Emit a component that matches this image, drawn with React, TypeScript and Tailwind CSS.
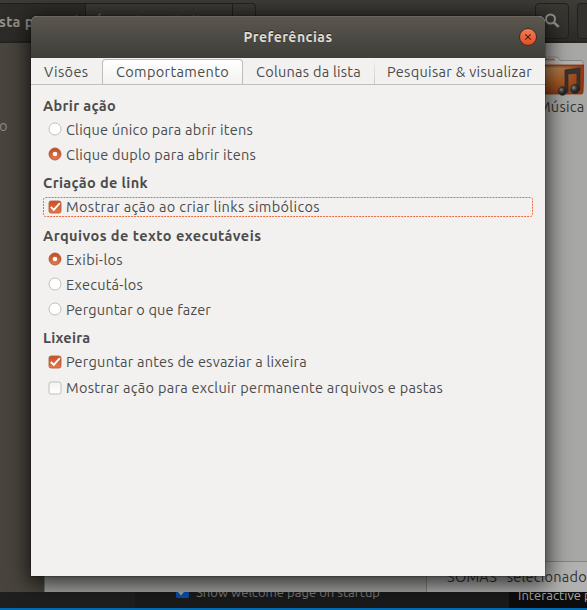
import { useLayoutEffect, useRef, useState } from "react";
import type { ReactNode } from "react";

function Label({ text, width, className = "" }: { text: string; width: number; className?: string }) {
  const ref = useRef<HTMLSpanElement>(null);
  const [tracking, setTracking] = useState(0);
  useLayoutEffect(() => {
    if (ref.current) {
      setTracking((width - ref.current.getBoundingClientRect().width) / text.length);
    }
  }, []);
  return (
    <span ref={ref} style={{ letterSpacing: tracking }} className={`inline-block shrink-0 whitespace-pre leading-5 ${className}`}>
      {text}
    </span>
  );
}

function Heading({ text, width, className = "" }: { text: string; width: number; className?: string }) {
  return (
    <h2 className={`flex h-6 items-center pl-3 font-bold ${className}`}>
      <Label text={text} width={width} />
    </h2>
  );
}

function Radio({ on = false }: { on?: boolean }) {
  return (
    <svg viewBox="0 0 14 14" className="mb-[2px] h-3.5 w-3.5 shrink-0">
      <defs>
        <linearGradient id="radio" x2="0" y2="1">
          <stop stopColor="#bd4c20" />
          <stop offset="1" stopColor="#ea7850" />
        </linearGradient>
      </defs>
      <circle cx="7" cy="7" r="6" fill={on ? "url(#radio)" : "#fff"} stroke={on ? "#ad5b3b" : "#bbb8b5"} strokeWidth=".9" />
      {on && <circle cx="7" cy="7" r="2.3" fill="#fff" />}
    </svg>
  );
}

function Check({ on = false }: { on?: boolean }) {
  return (
    <svg viewBox="0 0 14 14" className="h-3.5 w-3.5 shrink-0">
      <defs>
        <linearGradient id="check" x2="0" y2="1">
          <stop stopColor="#c94f21" />
          <stop offset="1" stopColor="#e8764e" />
        </linearGradient>
        <linearGradient id="empty" x2="0" y2="1">
          <stop stopColor="#f3f2f1" />
          <stop offset="1" stopColor="#fff" />
        </linearGradient>
      </defs>
      <rect x="1" y="1" width="12" height="12" rx="2" fill={on ? "url(#check)" : "url(#empty)"} stroke={on ? "#b06345" : "#bbb8b5"} strokeWidth=".9" />
      {on && <path d="m2.8 6.8 3 3 6-6.6" fill="none" stroke="#fff" strokeWidth="1.9" />}
    </svg>
  );
}

function Option({ text, width, control, className }: { text: string; width: number; control: ReactNode; className: string }) {
  return (
    <label className={`flex items-center gap-[4px] pl-[17px] ${className}`}>
      {control}
      <Label text={text} width={width} />
    </label>
  );
}

function FileManager() {
  return (
    <div className="flex h-[592px] flex-col overflow-hidden bg-[#a7a7a5]">
      <header className="flex h-[43px] shrink-0 border-b-2 border-[#252420] bg-linear-to-b from-[#3d3c37] to-[#2c2b28] pt-[3px]">
        <div className="flex h-9 w-[86px] shrink-0 items-center overflow-hidden border-t border-r border-[#20201d] bg-[#2d2c28] text-[14.5px] font-bold text-[#94928b]">
          <Label text="sta pessoal" width={80} className="-ml-px" />
        </div>
        <div className="flex h-9 w-[147px] shrink-0 items-center border-t border-r border-[#20201d] pl-2 font-bold text-[#74726c]">
          <Label text="Área de trabalho" width={120} />
        </div>
        <div className="h-9 w-[23px] shrink-0 rounded-tr border-t border-r border-[#24231f]" />
        <div className="flex-1" />
        <div className="flex h-9 w-[34px] shrink-0 items-center justify-center rounded border border-[#22211e] bg-linear-to-b from-[#393833] to-[#2f2e2b]">
          <svg viewBox="0 0 16 16" className="h-4 w-4" fill="none" stroke="#979690" strokeWidth="2">
            <circle cx="6.5" cy="6" r="4.5" />
            <path d="m9.8 9.3 4.9 4.6" strokeWidth="2.5" />
          </svg>
        </div>
        <div className="ml-2 h-9 w-[10px] shrink-0 rounded-l border border-r-0 border-[#22211e] bg-[#33322e]" />
      </header>
      <div className="flex min-h-0 flex-1">
        <aside className="w-[45px] shrink-0 border-r border-[#777775] bg-[#49453e] pt-[73px] text-[#8b8881]">
          <span className="-ml-px block leading-5">o</span>
        </aside>
        <main className="flex flex-1 flex-col">
          <div className="flex flex-1 justify-end">
            <figure className="w-[54px] pt-[13px]">
              <svg viewBox="0 0 50 40" className="ml-px h-10 w-[50px]">
                <defs>
                  <linearGradient id="folder" x2="0" y2="1">
                    <stop stopColor="#90431f" />
                    <stop offset=".12" stopColor="#b58a5c" />
                    <stop offset=".55" stopColor="#a9652b" />
                    <stop offset="1" stopColor="#8a3512" />
                  </linearGradient>
                  <linearGradient id="folderEdge">
                    <stop stopColor="#b15c1f" stopOpacity="0" />
                    <stop offset=".5" stopColor="#9f4818" stopOpacity=".25" />
                    <stop offset="1" stopColor="#94330d" />
                  </linearGradient>
                  <radialGradient id="note" cx=".35" cy=".35">
                    <stop stopColor="#858585" />
                    <stop offset=".6" stopColor="#3b3b3b" />
                    <stop offset="1" stopColor="#222" />
                  </radialGradient>
                </defs>
                <path d="M3 9V2.5q0-1.5 2-1.5h17q2 0 3 2l1 1.5h21q2 0 2 2V11H3Z" fill="#b2b2b1" stroke="#868685" />
                <path d="M9 3.5h12" stroke="#a26c4d" strokeWidth="2" />
                <path d="M1 9h49l-1 27q0 2-2 2H3Z" fill="url(#folder)" />
                <path d="M1 9h49l-1 27q0 2-2 2H3Z" fill="url(#folderEdge)" stroke="#79310f" strokeWidth=".8" />
                <path d="m31 14 15-2v22h-3V17l-9 1v18h-3Z" fill="#353535" stroke="#222" strokeWidth=".6" />
                <circle cx="28.5" cy="35" r="4.3" fill="url(#note)" stroke="#292929" strokeWidth=".7" />
                <circle cx="41" cy="33" r="4.5" fill="url(#note)" stroke="#292929" strokeWidth=".7" />
              </svg>
              <figcaption className="flex h-5 items-center pl-[5px] text-[#33332f]">
                <Label text="Música" width={46.5} className="mt-[1px]" />
              </figcaption>
            </figure>
          </div>
          <div className="flex h-[31px] justify-end">
            <div className="h-full w-[161px] overflow-hidden border-t border-l border-[#858583] bg-[#b1b1b0] pt-1 pl-[14px] text-[#333330]">
              <Label text={'"SOMAS" selecionado'} width={146} />
            </div>
          </div>
        </main>
      </div>
    </div>
  );
}

function Editor() {
  return (
    <div className="h-[18px] border-b-2 border-[#006bb3] bg-[#1a1a1a]">
      <div className="flex h-4 overflow-hidden">
        <div className="w-[135px] shrink-0 bg-[#1f1f1f]" />
        <div className="flex w-[374px] shrink-0 items-start pl-[41px] text-[13px] text-[#7c7c7c]">
          <svg viewBox="0 0 13 6" className="h-1.5 w-[13px] shrink-0">
            <path d="M0 0h13v4q0 2-1 2H1Q0 6 0 4Z" fill="#064fa8" />
            <path d="m2 0 3 3.6L8 0Z" fill="#a8a8a8" />
          </svg>
          <Label text="Show welcome page on startup" width={184} className="-mt-[10px] ml-[7px]" />
        </div>
        <div className="flex flex-1 items-start overflow-hidden bg-[#0c0c0c] pl-[9px] text-[13px] text-[#aaa]">
          <Label text="Interactive playground" width={133} className="-mt-[7px]" />
        </div>
      </div>
    </div>
  );
}

function Preferences() {
  return (
    <section className="absolute top-4 left-[31px] flex h-[560px] w-[514px] flex-col overflow-hidden rounded-t-md bg-[#f2f1f0] shadow-[0_5px_22px_3px_#000b,0_0_1px_1px_#0003]">
      <header className="relative flex h-[42px] shrink-0 items-center justify-center border-t border-[#69655c] bg-linear-to-b from-[#5b574f] to-[#3e3d39] text-[14px] font-bold text-[#dfdbd2]">
        <h1 className="[text-shadow:0_-1px_#292824]">
          <Label text="Preferências" width={89} />
        </h1>
        <button aria-label="Fechar" className="absolute top-[11px] right-[8px] flex h-[18px] w-[18px] items-center justify-center rounded-full border border-[#38302b] bg-linear-to-b from-[#f67b53] to-[#df4d20]">
          <svg viewBox="0 0 8 8" className="h-2 w-2">
            <path d="m1.3 1.3 5.4 5.4m0-5.4L1.3 6.7" stroke="#512312" strokeWidth="1.2" />
          </svg>
        </button>
      </header>
      <nav className="flex h-[27px] shrink-0 border-b border-[#c1bfbc] pt-px">
        <div className="w-[71px] pt-[2px] pl-[13px]"><Label text="Visões" width={44.5} /></div>
        <div className="w-[141px] rounded-t-[4px] border border-b-0 border-[#bebcb9] bg-linear-to-b from-white to-[#f3f2f1] pt-px pl-[13px]">
          <Label text="Comportamento" width={113} />
        </div>
        <div className="w-[131px] pt-[2px] pl-[13px]"><Label text="Colunas da lista" width={105} /></div>
        <div className="w-px bg-linear-to-b from-[#f2f1f0] to-[#cbc9c7]" />
        <div className="flex-1 pt-[2px] pl-[12px]"><Label text="Pesquisar & visualizar" width={145} /></div>
      </nav>
      <div className="flex flex-col pt-[9px]">
        <Heading text="Abrir ação" width={73} />
        <Option text="Clique único para abrir itens" width={187} control={<Radio />} className="h-6" />
        <Option text="Clique duplo para abrir itens" width={190} control={<Radio on />} className="h-[25px]" />
        <Heading text="Criação de link" width={105} className="mt-1" />
        <div className="relative mt-0.5">
          <Option text="Mostrar ação ao criar links simbólicos" width={254} control={<Check on />} className="h-5" />
          <svg className="absolute top-0 left-3 h-5 w-[490px]" viewBox="0 0 490 20">
            <rect x=".5" y=".5" width="489" height="19" rx="2" fill="none" stroke="#ed6b3e" strokeDasharray="2 1" />
          </svg>
        </div>
        <Heading text="Arquivos de texto executáveis" width={218.5} className="mt-[7px]" />
        <Option text="Exibi-los" width={57} control={<Radio on />} className="h-6" />
        <Option text="Executá-los" width={77} control={<Radio />} className="h-[25px]" />
        <Option text="Perguntar o que fazer" width={145} control={<Radio />} className="h-[25px]" />
        <Heading text="Lixeira" width={47.5} className="mt-1" />
        <Option text="Perguntar antes de esvaziar a lixeira" width={241} control={<Check on />} className="h-6" />
        <Option text="Mostrar ação para excluir permanente arquivos e pastas" width={377} control={<Check />} className="h-[27px]" />
      </div>
    </section>
  );
}

export default function App() {
  return (
    <div className="relative h-[610px] w-[587px] overflow-hidden font-['Ubuntu','Noto_Sans',sans-serif] text-[14.5px] text-[#4c4c4c]">
      <FileManager />
      <Editor />
      <Preferences />
    </div>
  );
}
